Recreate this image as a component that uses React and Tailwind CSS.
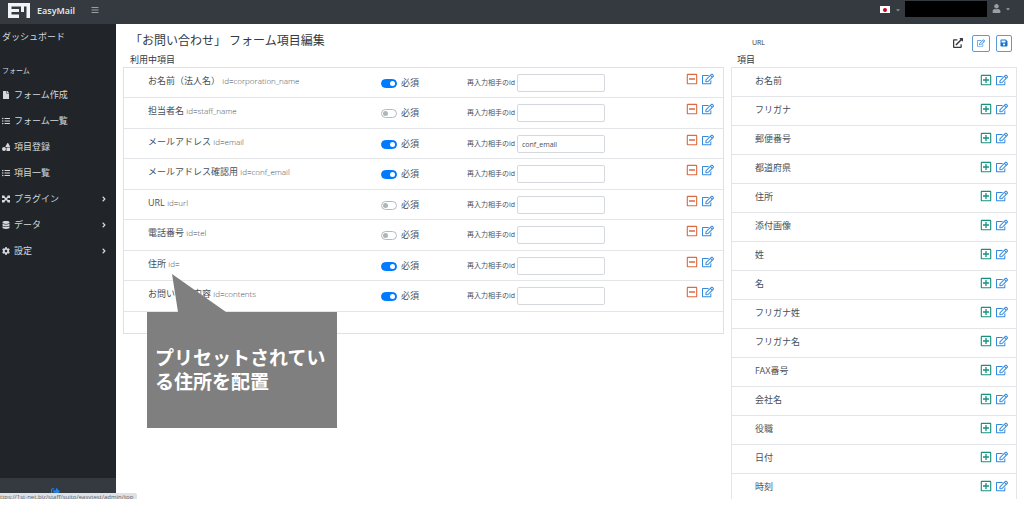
import { useState } from "react";
import {
  FaAngleRight,
  FaBars,
  FaCaretDown,
  FaCog,
  FaDatabase,
  FaExternalLinkAlt,
  FaFile,
  FaListUl,
  FaRegEdit,
  FaRegMinusSquare,
  FaRegPlusSquare,
  FaSave,
  FaShapes,
  FaSignOutAlt,
  FaUser,
} from "react-icons/fa";

const usedItems = [
  { name: "お名前（法人名）", id: "corporation_name", required: true, confirm: "" },
  { name: "担当者名", id: "staff_name", required: false, confirm: "" },
  { name: "メールアドレス", id: "email", required: true, confirm: "conf_email" },
  { name: "メールアドレス確認用", id: "conf_email", required: true, confirm: "" },
  { name: "URL", id: "url", required: false, confirm: "" },
  { name: "電話番号", id: "tel", required: false, confirm: "" },
  { name: "住所", id: "", required: true, confirm: "" },
  { name: "お問い合せ内容", id: "contents", required: true, confirm: "" },
];

const presetItems = [
  "お名前",
  "フリガナ",
  "郵便番号",
  "都道府県",
  "住所",
  "添付画像",
  "姓",
  "名",
  "フリガナ姓",
  "フリガナ名",
  "FAX番号",
  "会社名",
  "役職",
  "日付",
  "時刻",
];

const menu = [
  { label: "フォーム作成", icon: FaFile },
  { label: "フォーム一覧", icon: FaListUl },
  { label: "項目登録", icon: FaShapes },
  { label: "項目一覧", icon: FaListUl },
  { label: "プラグイン", icon: PluginIcon, children: true },
  { label: "データ", icon: FaDatabase, children: true },
  { label: "設定", icon: FaCog, children: true },
];

function Logo() {
  return (
    <svg viewBox="0 0 22 15" className="h-[15px] w-[22px]" fill="#f1f3f5" aria-hidden="true">
      <path d="M0 0h22v15h-3.500V3.500h-2.500V9H13V3.500H3.500V6H11v3H3.500v2.500H11V15H0z" />
    </svg>
  );
}

function PluginIcon({ className }) {
  return (
    <svg viewBox="0 0 16 16" className={className} fill="currentColor" aria-hidden="true">
      <path d="M3 3l10 10M13 3L3 13" stroke="currentColor" strokeWidth="3" />
      <path d="M0 1h5v5H0zM11 1h5v5h-5zM0 10h5v5H0zM11 10h5v5h-5zM6 6h4v4H6z" />
    </svg>
  );
}

function Header() {
  return (
    <header className="flex h-6 items-start bg-[#343a40] pr-[13px] text-[#c2c7d0]">
      <a href="#" className="flex items-center gap-[7px] pt-[3px] pl-2">
        <Logo />
        <span className="text-[9px] leading-[15px] font-semibold text-[#e9ecef]">EasyMail</span>
      </a>
      <button type="button" aria-label="メニュー" className="ml-4 pt-[6px] text-[#9a9fa5]">
        <FaBars className="size-2" />
      </button>
      <div className="ml-auto flex items-start">
        <button type="button" aria-label="言語" className="flex items-center gap-[5px] pt-[6px]">
          <span className="flex h-[7px] w-[10px] items-center justify-center bg-white">
            <span className="size-1 rounded-full bg-[#d0021b]" />
          </span>
          <FaCaretDown className="size-[6px] text-[#8a9096]" />
        </button>
        <span className="mt-px ml-1 h-4 w-[82px] bg-black" />
        <button type="button" aria-label="アカウント" className="ml-[5px] flex items-center gap-1 pt-1 text-[#9a9fa5]">
          <FaUser className="size-[9px]" />
          <FaCaretDown className="size-[6px]" />
        </button>
      </div>
    </header>
  );
}

function Sidebar() {
  return (
    <aside className="flex w-[116px] shrink-0 flex-col bg-[#212529] text-[9px] text-[#d5d8dc]">
      <a href="#" className="block pt-[6px] pl-[2px] leading-[14px]">
        ダッシュボード
      </a>
      <p className="mt-5 pl-[2px] text-[7px] leading-[14px]">フォーム</p>
      <nav className="mt-1">
        {menu.map(({ label, icon: Icon, children }) => (
          <a key={label} href="#" className="flex h-[26px] items-center gap-1 pr-2 pl-[2px]">
            <Icon className="size-2 shrink-0" />
            <span>{label}</span>
            {children && <FaAngleRight className="ml-auto size-2" />}
          </a>
        ))}
      </nav>
      <a href="#" aria-label="ログアウト" className="mt-auto flex h-[21px] justify-center bg-[#343a40] pt-[9px] pr-[6px] text-[#1f84e6]">
        <FaSignOutAlt className="size-[9px]" />
      </a>
    </aside>
  );
}

function UsedRow({ item }) {
  const [required, setRequired] = useState(item.required);
  const [confirm, setConfirm] = useState(item.confirm);

  return (
    <li className="grid grid-cols-[257fr_86fr_219fr_37fr] items-start border-b border-[#e3e5e8] odd:h-[30px] even:h-[31px]">
      <p className="pt-[6px] pl-6 text-[9px] leading-[14px] whitespace-nowrap">
        {item.name} <span className="text-[8px] font-light">id={item.id}</span>
      </p>
      <label className="flex items-center gap-1 pt-2 text-[9px] leading-[14px]">
        <input
          type="checkbox"
          checked={required}
          onChange={(e) => setRequired(e.target.checked)}
          className="flex h-[9px] w-4 appearance-none items-center rounded-full border border-[#b5bac0] bg-white px-px before:size-[5px] before:rounded-full before:bg-[#adb5bd] checked:justify-end checked:border-[#007bff] checked:bg-[#007bff] checked:before:bg-white"
        />
        必須
      </label>
      <label className="flex items-center gap-[2px] pt-[6px] text-[7px] whitespace-nowrap">
        再入力相手のid
        <input
          type="text"
          value={confirm}
          onChange={(e) => setConfirm(e.target.value)}
          className="h-[18px] w-[88px] rounded-xs border border-[#d5d9dd] px-1 text-[7px] text-[#495057]"
        />
      </label>
      <div className="flex gap-1 pt-[5px]">
        <button type="button" aria-label="外す" className="text-[#dc6a43]">
          <FaRegMinusSquare className="size-3" />
        </button>
        <button type="button" aria-label="編集" className="text-[#3289de]">
          <FaRegEdit className="size-3" />
        </button>
      </div>
    </li>
  );
}

function Callout() {
  return (
    <div className="absolute top-[207px] left-6 w-[190px]">
      <svg viewBox="0 0 190 38" className="h-[38px] w-full" fill="#7f7f7f" aria-hidden="true">
        <path d="M25 0L79 38H31z" />
      </svg>
      <p className="flex h-[116px] items-center bg-[#7f7f7f] pr-2 pl-2 text-[19px] leading-6 font-bold text-white">
        プリセットされている住所を配置
      </p>
    </div>
  );
}

function UsedColumn() {
  return (
    <section className="min-w-0 flex-1">
      <h1 className="h-[29px] pt-2 pl-[7px] text-[12px] leading-[18px]">「お問い合わせ」 フォーム項目編集</h1>
      <h2 className="h-[14px] pl-[7px] text-[9px] leading-[14px]">利用中項目</h2>
      <div className="relative">
        <ul className="border border-[#dfe2e5] pb-[21px] text-[#495057]">
          {usedItems.map((item) => (
            <UsedRow key={item.name} item={item} />
          ))}
        </ul>
        <Callout />
      </div>
    </section>
  );
}

function PresetColumn() {
  return (
    <section className="w-[32%] shrink-0">
      <div className="flex h-[29px] items-center gap-[6px] pt-[9px] pr-[5px] pl-[21px]">
        <span className="mr-auto text-[7px]">URL</span>
        <a href="#" aria-label="開く" className="mr-[3px]">
          <FaExternalLinkAlt className="size-[10px]" />
        </a>
        <button type="button" aria-label="フォーム編集" className="flex h-[17px] w-[18px] items-center justify-center rounded-xs border border-[#5b9bd8] text-[#3289de]">
          <FaRegEdit className="size-2" />
        </button>
        <button type="button" aria-label="保存" className="flex h-[17px] w-4 items-center justify-center rounded-xs border border-[#5b9bd8] text-[#1a72cc]">
          <FaSave className="size-2" />
        </button>
      </div>
      <h2 className="h-[14px] pl-[6px] text-[9px] leading-[14px]">項目</h2>
      <ul className="border-x border-t border-[#e3e5e8]">
        {presetItems.map((name) => (
          <li key={name} className="flex h-[29px] items-start border-b border-[#e3e5e8] pt-[6px] pr-2 pl-[23px] last:h-[25px] last:border-b-0">
            <span className="mr-auto text-[9px] leading-[14px] text-[#495057]">{name}</span>
            <button type="button" aria-label={`${name}を追加`} className="mr-1 text-[#17917f]">
              <FaRegPlusSquare className="size-3" />
            </button>
            <button type="button" aria-label={`${name}を編集`} className="text-[#3289de]">
              <FaRegEdit className="size-3" />
            </button>
          </li>
        ))}
      </ul>
    </section>
  );
}

export default function App() {
  return (
    <div className="bg-white font-['Open_Sans','Noto_Sans_CJK_JP',sans-serif] text-[#343a40]">
      <Header />
      <div className="relative flex">
        <Sidebar />
        <main className="flex min-w-0 flex-1 gap-[7px] px-[7px]">
          <UsedColumn />
          <PresetColumn />
        </main>
        {/* link target shown by the browser */}
        <div className="absolute bottom-0 left-0 h-[6px] overflow-hidden rounded-tr-xs bg-[#dee1e6] pr-1 text-[6px] leading-[9px] whitespace-nowrap text-[#5f6368]">
          ttps://1st-net.biz/staff/suito/easytest/admin/top
        </div>
      </div>
    </div>
  );
}
